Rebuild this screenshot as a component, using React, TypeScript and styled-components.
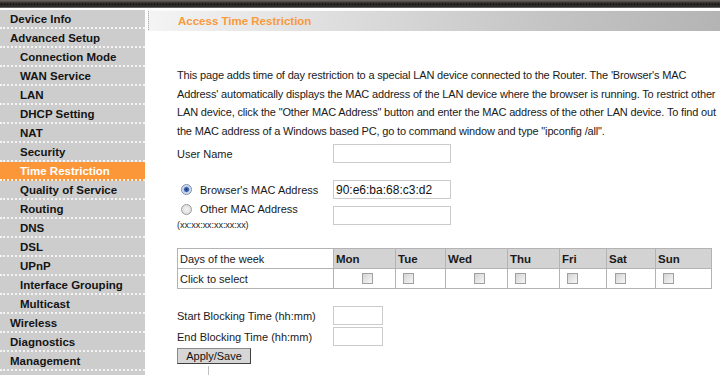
import styled, { createGlobalStyle } from "styled-components";

const GlobalStyle = createGlobalStyle`
    html, body {
        margin: 0;
        padding: 0;
        background: #ffffff;
        font-family: "Liberation Sans", Arial, sans-serif;
    }
`;

type MenuItem = { label: string; sub?: boolean; active?: boolean };

const menu: MenuItem[] = [
    { label: "Device Info" },
    { label: "Advanced Setup" },
    { label: "Connection Mode", sub: true },
    { label: "WAN Service", sub: true },
    { label: "LAN", sub: true },
    { label: "DHCP Setting", sub: true },
    { label: "NAT", sub: true },
    { label: "Security", sub: true },
    { label: "Time Restriction", sub: true, active: true },
    { label: "Quality of Service", sub: true },
    { label: "Routing", sub: true },
    { label: "DNS", sub: true },
    { label: "DSL", sub: true },
    { label: "UPnP", sub: true },
    { label: "Interface Grouping", sub: true },
    { label: "Multicast", sub: true },
    { label: "Wireless" },
    { label: "Diagnostics" },
    { label: "Management" },
    { label: "" },
];

// width of each day column and how far its checkbox sits from the left edge
const days = [
    { name: "Mon", width: 62, indent: 26 },
    { name: "Tue", width: 50, indent: 5 },
    { name: "Wed", width: 62, indent: 26 },
    { name: "Thu", width: 52, indent: 5 },
    { name: "Fri", width: 47, indent: 5 },
    { name: "Sat", width: 49, indent: 6 },
    { name: "Sun", width: 56, indent: 5 },
];

function App() {
    return (
        <Page>
            <GlobalStyle />
            <TopBar />
            <Body>
                <Sidebar>
                    {menu.map((m, i) => (
                        <NavItem key={i} $sub={m.sub} $active={m.active}>
                            {m.label}
                        </NavItem>
                    ))}
                </Sidebar>
                <Main>
                    <HeaderBar>
                        <Title>Access Time Restriction</Title>
                    </HeaderBar>
                    <Content>
                        <Intro>
                            {`This page adds time of day restriction to a special LAN device connected to the Router. The 'Browser's MAC
Address' automatically displays the MAC address of the LAN device where the browser is running. To restrict other
LAN device, click the "Other MAC Address" button and enter the MAC address of the other LAN device. To find out
the MAC address of a Windows based PC, go to command window and type "ipconfig /all".`}
                        </Intro>

                        <Row $top={4}>
                            <Label>User Name</Label>
                            <TextBox />
                        </Row>

                        <Row $top={17}>
                            <Label>
                                <Radio type="radio" name="mac" defaultChecked />
                                <span>Browser's MAC Address</span>
                            </Label>
                            <TextBox defaultValue="90:e6:ba:68:c3:d2" />
                        </Row>

                        <Row $top={3} $alignTop>
                            <StackLabel>
                                <RadioLine>
                                    <Radio type="radio" name="mac" />
                                    <span>Other MAC Address</span>
                                </RadioLine>
                                <Hint>(xx:xx:xx:xx:xx:xx)</Hint>
                            </StackLabel>
                            <TextBox style={{ marginTop: 4 }} />
                        </Row>

                        <DayTable>
                            <colgroup>
                                <col style={{ width: 156 }} />
                                {days.map((d) => (
                                    <col key={d.name} style={{ width: d.width }} />
                                ))}
                            </colgroup>
                            <tbody>
                                <tr>
                                    <Cell>Days of the week</Cell>
                                    {days.map((d) => (
                                        <DayCell key={d.name}>{d.name}</DayCell>
                                    ))}
                                </tr>
                                <tr>
                                    <Cell>Click to select</Cell>
                                    {days.map((d) => (
                                        <Cell key={d.name}>
                                            <Check type="checkbox" $indent={d.indent} />
                                        </Cell>
                                    ))}
                                </tr>
                            </tbody>
                        </DayTable>

                        <Row $top={17}>
                            <Label>Start Blocking Time (hh:mm)</Label>
                            <TimeBox />
                        </Row>
                        <Row $top={2}>
                            <Label>End Blocking Time (hh:mm)</Label>
                            <TimeBox />
                        </Row>
                        <ApplyButton>Apply/Save</ApplyButton>
                        <Tick />
                    </Content>
                </Main>
            </Body>
        </Page>
    );
}

const Page = styled.div`
    width: 720px;
    height: 375px;
    overflow: hidden;
`;
const TopBar = styled.div`
    height: 8px;
    background:
        radial-gradient(circle, #0c0c0c 0.7px, transparent 1px) 0 3px / 3px 3px repeat-x,
        linear-gradient(#6b6664 0, #4a4644 2px, #2a2826 3px, #2e2c2a 7px, #9a9896 8px);
`;
const Body = styled.div`
    display: flex;
    gap: 3px;
    padding-top: 1px;
`;
const Sidebar = styled.div`
    width: 145px;
    flex-shrink: 0;
    display: flex;
    flex-direction: column;
    padding-top: 1px;
`;
const NavItem = styled.div<{ $sub?: boolean; $active?: boolean }>`
    height: 17px;
    line-height: 18px;
    padding-left: ${(p) => (p.$sub ? 20 : 10)}px;
    background: ${(p) => (p.$active ? "#fb9738" : "#cdcdcd")};
    color: ${(p) => (p.$active ? "#ffffff" : "#141414")};
    border-bottom: 2px dotted #f4f4f4;
    font-family: "Liberation Sans", Arial, sans-serif;
    font-weight: bold;
    font-size: 11.5px;
    white-space: nowrap;
`;
const Main = styled.div`
    flex: 1;
    min-width: 0;
`;
const HeaderBar = styled.div`
    margin-top: 1px;
    height: 20px;
    display: flex;
    align-items: center;
    padding-left: 29px;
    border-top: 1px solid #fafafa;
    border-left: 1px dotted #dddddd;
    background: linear-gradient(90deg, #f4f4f4 0%, #dcdcdc 35%, #c4c4c4 70%, #b4b4b4 100%);
`;
const Title = styled.div`
    color: #f99a3c;
    font-weight: bold;
    font-size: 11.5px;
`;
const Content = styled.div`
    padding-left: 29px;
    font-size: 11px;
    color: #1a1a1a;
`;
const Intro = styled.p`
    margin: 35px 0 0;
    line-height: 18.5px;
    white-space: pre;
    letter-spacing: -0.16px;
`;
const Row = styled.div<{ $top: number; $alignTop?: boolean }>`
    display: flex;
    align-items: ${(p) => (p.$alignTop ? "flex-start" : "center")};
    margin-top: ${(p) => p.$top}px;
`;
const Label = styled.div`
    width: 156px;
    flex-shrink: 0;
    display: flex;
    align-items: center;
    gap: 8px;
`;
const StackLabel = styled.div`
    width: 156px;
    flex-shrink: 0;
    display: flex;
    flex-direction: column;
`;
const RadioLine = styled.div`
    display: flex;
    align-items: center;
    gap: 8px;
    height: 14px;
`;
const Hint = styled.div`
    font-size: 9px;
    line-height: 14px;
    margin-top: 2px;
    letter-spacing: -0.05px;
`;
const Radio = styled.input`
    appearance: none;
    margin: 0 0 0 4px;
    width: 11px;
    height: 11px;
    border-radius: 50%;
    border: 1px solid #9a9a9a;
    background: radial-gradient(circle, #f2f2f2 0, #d8d8d8 100%);
    &:checked {
        background: radial-gradient(circle, #1d3b78 0, #3a62ad 2px, #c9d6ee 3.2px, #e8e8e8 100%);
        border-color: #7e8fb0;
    }
`;
const TextBox = styled.input`
    box-sizing: border-box;
    width: 118px;
    height: 19px;
    margin: 0;
    padding: 0 2px;
    border: 1px solid #cbcbcb;
    font-family: "Liberation Sans", Arial, sans-serif;
    font-size: 12px;
    color: #111;
`;
const TimeBox = styled(TextBox)`
    width: 50px;
`;
const DayTable = styled.table`
    margin-top: 16px;
    width: 535px;
    table-layout: fixed;
    border-collapse: collapse;
    border: 1px solid #a9a9a9;
`;
const Cell = styled.td`
    height: 19px;
    padding: 0 0 0 2px;
    border: 1px solid #b3b3b3;
    font-size: 11px;
    background: #ffffff;
    vertical-align: middle;
`;
const DayCell = styled(Cell)`
    background: #d3d3d3;
    font-weight: bold;
    font-size: 11.5px;
`;
const Check = styled.input<{ $indent: number }>`
    appearance: none;
    display: block;
    margin: 0 0 0 ${(p) => p.$indent}px;
    width: 11px;
    height: 11px;
    border: 1px solid #a0a0a0;
    background: linear-gradient(135deg, #d4d4d4, #f6f6f6);
`;
const ApplyButton = styled.button`
    display: block;
    margin-top: 2px;
    width: 74px;
    height: 16px;
    padding: 0;
    background: #d6d6d6;
    border: 1px solid #404040;
    border-top-color: #8a8a8a;
    border-left-color: #8a8a8a;
    font-family: "Liberation Sans", Arial, sans-serif;
    font-size: 11px;
    color: #111;
`;
const Tick = styled.div`
    margin: 2px 0 0 31px;
    height: 10px;
    border-left: 1px solid #c0c0c0;
`;

export default App;
